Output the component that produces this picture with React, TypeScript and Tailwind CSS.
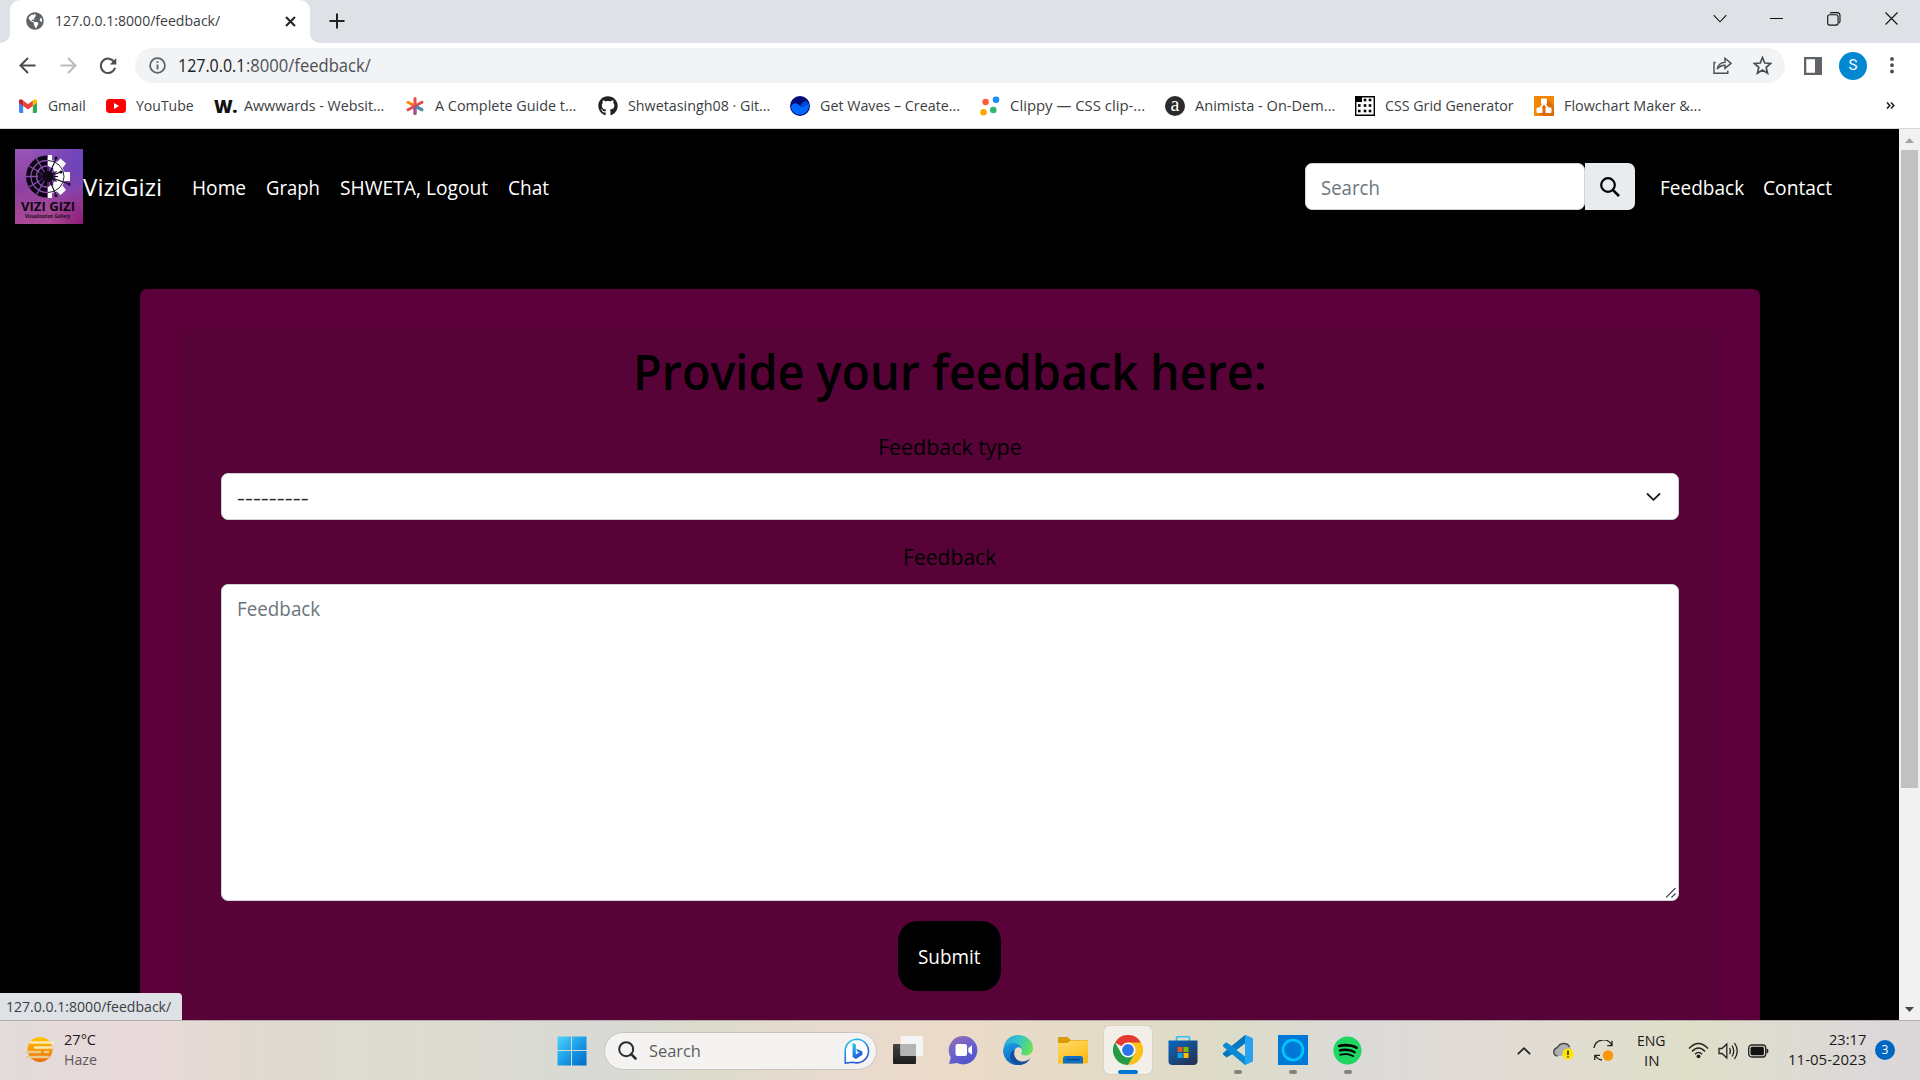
import React, { useLayoutEffect, useRef, useState } from "react";
import { FaGithub, FaSpotify, FaGlobeAmericas } from "react-icons/fa";

/* Text condensed or widened to a given advance width. */
function T({ w, children, className = "" }: { w: number; children: string; className?: string }) {
  const ref = useRef<HTMLSpanElement>(null);
  const [k, setK] = useState(1);
  useLayoutEffect(() => {
    if (ref.current && ref.current.offsetWidth) setK(w / ref.current.offsetWidth);
  }, [w]);
  return (
    <span className={"block shrink-0 whitespace-pre " + className} style={{ width: w }}>
      <span ref={ref} className="inline-block origin-left" style={{ transform: `scaleX(${k})` }}>
        {children}
      </span>
    </span>
  );
}

function TabStrip() {
  return (
    <div className="flex h-[43px] items-start bg-[#dee1e6]">
      <div className="flex h-[43px] w-[10px] items-end bg-white">
        <div className="h-full w-full rounded-br-[10px] bg-[#dee1e6]" />
      </div>
      <div className="flex h-[43px] w-[300px] items-center rounded-t-[10px] bg-white pl-4">
        <div className="flex h-[41px] w-full items-center pb-px">
          <FaGlobeAmericas className="size-[18px] text-[#5f6368]" />
          <T w={165} className="ml-[11px] pb-px text-[15px] text-[#3c4043]">127.0.0.1:8000/feedback/</T>
          <svg className="ml-[65px] size-[11px]" viewBox="0 0 11 11" stroke="#202124" strokeWidth="2">
            <path d="M1 1L10 10M10 1L1 10" />
          </svg>
        </div>
      </div>
      <div className="h-[43px] w-[10px] bg-white">
        <div className="h-full w-full rounded-bl-[10px] bg-[#dee1e6]" />
      </div>
      <svg className="mt-[13px] ml-[9px] size-4" viewBox="0 0 16 16" stroke="#202124" strokeWidth="2">
        <path d="M8 .5V15.5M.5 8H15.5" />
      </svg>
      <svg className="mt-[14px] ml-auto h-[10px] w-[14px]" viewBox="0 0 14 10" fill="none" stroke="#111" strokeWidth="1.1">
        <path d="M.7 1.2L7 7.8L13.3 1.2" />
      </svg>
      <svg className="mt-[14px] ml-[43px] h-[9px] w-[14px]" viewBox="0 0 14 9" stroke="#111">
        <path d="M0 4.5H13" />
      </svg>
      <svg className="mt-3 ml-[43px] size-[14px]" viewBox="0 0 14 14" fill="none" stroke="#111" strokeWidth="1.1">
        <rect x=".7" y="2.7" width="10.4" height="10.4" rx="2" />
        <path d="M3 1.2Q3.6.6 5 .6H10Q13 .6 13 3.6V9Q13 10.6 12.2 11" />
      </svg>
      <svg className="mt-3 mr-[22px] ml-[44px] size-[13px]" viewBox="0 0 13 13" stroke="#111" strokeWidth="1.1">
        <path d="M.5.5L12.5 12.5M12.5.5L.5 12.5" />
      </svg>
    </div>
  );
}

function Toolbar() {
  return (
    <div className="flex h-[45px] items-center bg-white pl-[19px]">
      <svg className="size-[17px]" viewBox="0 0 17 17" fill="none" stroke="#4a4d51" strokeWidth="2">
        <path d="M16.5 8.5H2M9 1L1.5 8.5L9 16" />
      </svg>
      <svg className="ml-6 size-[17px]" viewBox="0 0 17 17" fill="none" stroke="#b9bbbd" strokeWidth="2">
        <path d="M.5 8.5H15M8 1L15.5 8.5L8 16" />
      </svg>
      <svg className="ml-[22px] size-[18px]" viewBox="0 0 18 18" fill="none" stroke="#4a4d51" strokeWidth="2">
        <path d="M15.2 5A7.2 7.2 0 1 0 16 10.8" />
        <path d="M17.3 1V7.4H10.8Z" fill="#4a4d51" stroke="none" />
      </svg>
      <div className="ml-[18px] flex h-[35px] w-[1650px] items-center rounded-full bg-[#f1f3f4] pl-[14px]">
        <svg className="size-[17px]" viewBox="0 0 17 17" fill="none" stroke="#5f6368" strokeWidth="1.8">
          <circle cx="8.5" cy="8.5" r="7.4" />
          <path d="M8.5 7.5V12.5M8.5 4.3V6" />
        </svg>
        <div className="ml-3 flex text-[17.5px]">
          <T w={67.5} className="text-[#202124]">127.0.0.1</T>
          <T w={125} className="text-[#4d5156]">:8000/feedback/</T>
        </div>
        <svg className="ml-auto size-[19px]" viewBox="0 0 19 19" fill="none" stroke="#4a4d51" strokeWidth="1.4">
          <path d="M2.6 6.5H1V17.3H14.8V14.6" />
          <path d="M4.2 13.2C5 8.8 7.5 6.6 12 6.4V2.2L18 7.4L12 12.4V9.2C8.5 9.2 6.3 10.3 4.2 13.2Z" />
        </svg>
        <svg className="mr-[13px] ml-[21px] size-[19px]" viewBox="0 0 18 18" fill="none" stroke="#4a4d51" strokeWidth="1.6">
          <path d="M9 1.4L11.1 6.6L16.7 7.1L12.5 10.8L13.8 16.3L9 13.3L4.2 16.3L5.5 10.8L1.3 7.1L6.9 6.6Z" />
        </svg>
      </div>
      <svg className="ml-[19px] size-[18px]" viewBox="0 0 18 18">
        <path d="M0 0H18V18H0ZM2.3 2.3V15.7H11V2.3Z" fill="#5f6368" fillRule="evenodd" />
      </svg>
      <div className="ml-[17px] flex size-7 items-center justify-center rounded-full bg-[#0288d1] font-[Roboto] text-[15px] text-white">S</div>
      <svg className="ml-[23px] h-[17px] w-1" viewBox="0 0 4 17" fill="#4a4d51">
        <circle cx="2" cy="2" r="1.9" /><circle cx="2" cy="8.2" r="1.9" /><circle cx="2" cy="14.5" r="1.9" />
      </svg>
    </div>
  );
}

function Gmail() {
  return (
    <svg className="size-5" viewBox="0 0 20 20">
      <path d="M1 4.5V15.5Q1 17 2.4 17H5.2V9Z" fill="#4285f4" />
      <path d="M19 4.5V15.5Q19 17 17.6 17H14.8V9Z" fill="#34a853" />
      <path d="M14.8 4.6L16.3 3.5Q19 2.3 19 5V6.8L14.8 10Z" fill="#fbbc04" />
      <path d="M5.2 4.6L10 8.3L14.8 4.6V10L10 13.6L5.2 10Z" fill="#ea4335" />
      <path d="M1 5Q1 2.3 3.7 3.5L5.2 4.6V10L1 6.8Z" fill="#c5221f" />
    </svg>
  );
}

const bookmarks: { name: string; w: number; gap: string; icon: React.ReactNode }[] = [
  { name: "Gmail", w: 38, gap: "mr-5", icon: <Gmail /> },
  {
    name: "YouTube", w: 58, gap: "mr-5",
    icon: <svg className="size-5" viewBox="0 0 20 20"><rect y="3" width="20" height="14" rx="3.4" fill="#f00" /><path d="M8 7L13.2 10L8 13Z" fill="#fff" /></svg>,
  },
  { name: "Awwwards - Websit...", w: 140, gap: "mr-[21px]", icon: <span className="block w-5 text-[18px] leading-5 font-extrabold tracking-tight text-[#111]">W.</span> },
  {
    name: "A Complete Guide t...", w: 141, gap: "mr-[22px]",
    icon: (
      <svg className="size-5" viewBox="0 0 20 20" strokeWidth="3" strokeLinecap="round">
        <defs><linearGradient id="ast" x1="0" y1="0" x2="1" y2="1"><stop offset=".15" stopColor="#ff8a00" /><stop offset=".5" stopColor="#e8434c" /><stop offset="1" stopColor="#8a5cc0" /></linearGradient></defs>
        <path d="M10 2.5V17.5" stroke="#ec4a4a" /><path d="M3 6.2L17 13.8M17 6.2L3 13.8" stroke="url(#ast)" />
        <path d="M11.5 10.8L16.6 13.6" stroke="#3d8fae" /><path d="M10 11V17.5" stroke="#a0528f" />
      </svg>
    ),
  },
  { name: "Shwetasingh08 · Git...", w: 142, gap: "mr-5", icon: <FaGithub className="size-5 text-[#1f2328]" /> },
  {
    name: "Get Waves – Create...", w: 140, gap: "mr-5",
    icon: <svg className="size-5" viewBox="0 0 20 20"><circle cx="10" cy="10" r="10" fill="#000b76" /><path d="M1 10C4 6 7 7 9.5 9.6C12.5 12.5 15 9 18.9 7.6C20 13 16 18.8 10 18.8C5 18.8 1 15 1 10Z" fill="#0066ff" /><path d="M10 10C12 5.5 15 4.5 17.3 5.5L18.6 8C15 9 13 12 10 10Z" fill="#0044d8" /></svg>,
  },
  {
    name: "Clippy — CSS clip-...", w: 135, gap: "mr-5",
    icon: <svg className="size-5" viewBox="0 0 20 20"><circle cx="16" cy="3.7" r="3.3" fill="#1e8cff" /><circle cx="5.6" cy="6" r="3.2" fill="#ff5a36" /><circle cx="13.3" cy="14" r="3.3" fill="#2fb673" /><circle cx="3.5" cy="16.2" r="3.3" fill="#ffa400" /></svg>,
  },
  {
    name: "Animista - On-Dem...", w: 140, gap: "mr-5",
    icon: <span className="flex size-5 items-center justify-center rounded-full bg-[#2b2b2b] pb-1 font-['Liberation_Serif'] text-[20px] leading-none text-white">a</span>,
  },
  {
    name: "CSS Grid Generator", w: 129, gap: "mr-5",
    icon: (
      <svg className="size-5" viewBox="0 0 20 20">
        <path d="M.7.7H19.3V19.3H.7Z" fill="#fff" stroke="#000" strokeWidth="1.4" /><path d="M0 0H7V6H0Z" />
        {[[10, 4], [15, 4], [4.3, 9.5], [10, 9.5], [15, 9.5], [4.3, 15], [10, 15], [15, 15]].map(([x, y]) => <rect key={`${x}-${y}`} x={x - 1.3} y={y - 1.3} width="2.6" height="2.6" />)}
      </svg>
    ),
  },
  {
    name: "Flowchart Maker &...", w: 137, gap: "mr-0",
    icon: (
      <svg className="size-5" viewBox="0 0 20 20"><rect width="20" height="20" rx="1" fill="#f08705" /><path d="M12.5 3L20 10V20H9L3 16Z" fill="#df6c0c" /><path d="M10 7L5.5 13M10 7L14.5 13" stroke="#fff" strokeWidth="1.8" /><rect x="7" y="2.5" width="6" height="5.5" rx="1" fill="#fff" /><rect x="2.5" y="11.5" width="6" height="5.5" rx="1" fill="#fff" /><rect x="11.5" y="11.5" width="6" height="5.5" rx="1" fill="#fff" /></svg>
    ),
  },
];

function Bookmarks() {
  return (
    <div className="flex h-[41px] items-center border-b border-[#d5d7da] bg-white pb-[5px] pl-[18px]">
      {bookmarks.map((b) => (
        <div key={b.name} className={"flex items-center " + b.gap}>
          {b.icon}
          <T w={b.w} className="ml-[10px] pb-[2px] text-[15px] leading-5 text-[#3c4043]">{b.name}</T>
        </div>
      ))}
      <svg className="mr-[25px] ml-auto h-[7px] w-[9px]" viewBox="0 0 9 7" fill="none" stroke="#202124" strokeWidth="1.6">
        <path d="M1 .5L3.8 3.5L1 6.5M5 .5L7.8 3.5L5 6.5" />
      </svg>
    </div>
  );
}

function Logo() {
  const spokes = [0, 30, 60, 90, 120, 150, 180, 210, 240, 270, 300, 330];
  return (
    <svg className="h-[75px] w-[68px] shrink-0" viewBox="0 0 68 75">
      <defs>
        <linearGradient id="lg" x1="0" y1="0" x2=".25" y2="1"><stop offset="0" stopColor="#9758b8" /><stop offset=".5" stopColor="#8f3fa2" /><stop offset="1" stopColor="#ab4a94" /></linearGradient>
        <radialGradient id="lg2" cx="1" cy=".15" r=".8"><stop offset="0" stopColor="#6a45bd" /><stop offset="1" stopColor="#6a45bd" stopOpacity="0" /></radialGradient>
        <radialGradient id="lg3" cx="1" cy="1" r=".5"><stop offset="0" stopColor="#8c1a78" /><stop offset="1" stopColor="#8c1a78" stopOpacity="0" /></radialGradient>
      </defs>
      <rect width="68" height="75" fill="url(#lg)" /><rect width="68" height="75" fill="url(#lg2)" /><rect width="68" height="75" fill="url(#lg3)" />
      <path d="M32 6.5A21 21 0 0 0 32 48.5Z" fill="#090510" />
      <path d="M33 6H37V11L42 13L45.5 9.5L51 14.5L47.5 19L49.5 23H55V32H49.5L47.5 36.5L51 41L45.5 46L42 42.5L37 44V49H33V38A11 11 0 0 0 33 17Z" fill="#fff" />
      <g fill="none" stroke="#8b4fb4" strokeWidth="1.3">
        <path d="M32 11.5A16 16 0 0 0 32 43.5M32 17A10.5 10.5 0 0 0 32 38M11 27.5H32M32 27.5L14 17M32 27.5L14 38M32 27.5L21.5 9.5M32 27.5L21.5 45.5" />
      </g>
      <g stroke="#100818" strokeWidth="1.1">
        {spokes.map((a) => <path key={a} d="M33 27.5H43" transform={`rotate(${a} 33 27.5)`} />)}
        <path d="M33 27.5L41 10M33 27.5L54 35M33 27.5L46 23M33 27.5L41 46" />
      </g>
      <path d="M33 11.5A16 16 0 0 1 33 43.5" fill="none" stroke="#100818" strokeWidth=".9" />
      <circle cx="33" cy="27.5" r="5.5" fill="#100818" />
      <g fill="#100818"><circle cx="41" cy="9" r="1.6" /><circle cx="54" cy="35" r="1.6" /><circle cx="46" cy="23" r="1.6" /><circle cx="41" cy="46.5" r="1.6" /></g>
      <text x="6" y="61.5" textLength="54" lengthAdjust="spacingAndGlyphs" fontFamily="Open Sans" fontWeight="700" fontSize="12" fill="#0c0610">VIZI GIZI</text>
      <text x="10" y="68.5" textLength="45" lengthAdjust="spacingAndGlyphs" fontFamily="Open Sans" fontWeight="700" fontSize="5.2" fill="#1c0c22">Visualization Gallery</text>
    </svg>
  );
}

function Navbar() {
  return (
    <nav className="flex h-[115px] items-center pl-[15px] text-[19.5px] text-white">
      <Logo />
      <T w={79} className="pt-[2px] text-[24.5px]">ViziGizi</T>
      <T w={54} className="ml-[30px] pt-[2px]">Home</T>
      <T w={54} className="ml-5 pt-[2px]">Graph</T>
      <T w={148} className="ml-5 pt-[2px]">SHWETA, Logout</T>
      <T w={41} className="ml-5 pt-[2px]">Chat</T>
      <div className="ml-auto flex h-[47px] bg-black">
        <div className="flex h-[47px] w-[280px] items-center rounded-[7px] border border-[#ced4da] bg-white pl-[15px]">
          <T w={59} className="pt-[2px] text-[#6c757d]">Search</T>
        </div>
        <div className="flex h-[47px] w-[50px] items-center justify-center rounded-r-[7px] bg-[#e9ecef]">
          <svg className="size-5" viewBox="0 0 20 20" fill="none" stroke="#000" strokeWidth="2.2">
            <circle cx="8" cy="8" r="6.8" /><path d="M12.8 12.8L19 19" strokeWidth="2.5" />
          </svg>
        </div>
      </div>
      <T w={84} className="ml-[25px] pt-[2px]">Feedback</T>
      <T w={69} className="mr-[67px] ml-[19px] pt-[2px]">Contact</T>
    </nav>
  );
}

function FeedbackCard() {
  return (
    <section className="mx-auto mt-[45px] h-[760px] w-[1620px] rounded-[7px] bg-[#5c003b] p-[41px]">
      <div className="flex h-[719px] flex-col items-center bg-[#570338] px-10 pt-[11px] text-black">
        <T w={634} className="text-[49px] leading-[60px] font-semibold">Provide your feedback here:</T>
        <T w={144} className="mt-[30px] text-[22px] leading-[30px]">Feedback type</T>
        <div className="mt-3 flex h-[47px] w-full items-center justify-between rounded-[7px] border border-[#ced4da] bg-white pr-[17px] pl-[15px]">
          <T w={71} className="pt-[2px] text-[19.5px] text-[#212529]">---------</T>
          <svg className="h-2 w-[15px]" viewBox="0 0 15 8" fill="none" stroke="#1b1f23" strokeWidth="1.8" strokeLinecap="round"><path d="M1.5 1L7.5 6.8L13.5 1" /></svg>
        </div>
        <T w={93} className="mt-[21px] text-[22px] leading-[30px]">Feedback</T>
        <div className="mt-[13px] flex h-[317px] w-full justify-between rounded-[7px] border border-[#ced4da] bg-white pt-2 pl-[15px]">
          <T w={83} className="text-[19.5px] leading-[31px] text-[#6c757d]">Feedback</T>
          <svg className="mr-[2px] mb-[2px] size-[10px] self-end" viewBox="0 0 10 10" stroke="#444" strokeWidth="1.2"><path d="M0 9.5L9.5 0M5.5 9.5L9.5 5.5" /></svg>
        </div>
        <div className="mt-5 flex h-[70px] w-[103px] items-center justify-center rounded-[20px] bg-black pt-px text-white">
          <T w={63} className="text-[19.5px]">Submit</T>
        </div>
      </div>
    </section>
  );
}

function PageScrollbar() {
  return (
    <div className="flex w-[21px] flex-col items-center bg-[#f1f1f1]">
      <svg className="mt-[9px] h-[5px] w-[9px]" viewBox="0 0 9 5"><path d="M0 5L4.5 0L9 5Z" fill="#a3a3a3" /></svg>
      <div className="mt-[7px] h-[638px] w-[17px] bg-[#c1c1c1]" />
      <svg className="mt-auto mb-2 h-[5px] w-[9px]" viewBox="0 0 9 5"><path d="M0 0L4.5 5L9 0Z" fill="#454545" /></svg>
    </div>
  );
}

function AppCell({ children, mark }: { children: React.ReactNode; mark?: "active" | "open" }) {
  return (
    <div className="flex h-[59px] w-[55px] justify-center">
      <div className={"mt-[5px] flex h-12 w-12 flex-col items-center rounded-[5px] pt-[9px] " + (mark === "active" ? "bg-[#f2eee8] shadow-[0_0_1px_#0005]" : "")}>
        {children}
        {mark === "active" && <div className="mt-[5px] h-1 w-5 rounded-full bg-[#0078d4]" />}
        {mark === "open" && <div className="mt-[5px] h-1 w-2 rounded-full bg-[#858379]" />}
      </div>
    </div>
  );
}

const S = "block size-[30px] shrink-0";

function Apps() {
  return (
    <div className="ml-[3px] flex">
      <AppCell>
        <svg className={S} viewBox="0 0 30 30">
          <defs><linearGradient id="tv" x1="0" y1="0" x2="0" y2="1"><stop stopColor="#454545" /><stop offset="1" stopColor="#1b1b1b" /></linearGradient></defs>
          <rect y="9" width="23" height="20" rx="1" fill="url(#tv)" /><rect x="7.5" y="1" width="22.5" height="20" rx="1" fill="#f4f4f4" /><path d="M7.5 9H23V21H8.5Q7.5 21 7.5 20Z" fill="#b4b4b4" />
        </svg>
      </AppCell>
      <AppCell>
        <svg className={S} viewBox="0 0 30 30">
          <defs><linearGradient id="ch" x1="0" y1="0" x2=".6" y2="1"><stop stopColor="#9a6fb0" /><stop offset=".55" stopColor="#6c62cc" /><stop offset="1" stopColor="#4e55cc" /></linearGradient></defs>
          <path d="M15 1A14.2 14.2 0 1 1 9 28L1 29L2.8 22.5A14.2 14.2 0 0 1 15 1Z" fill="url(#ch)" /><rect x="7.5" y="9" width="11.5" height="12" rx="2" fill="#fff" /><path d="M20.3 13L24 10.2V19.8L20.3 17Z" fill="#fff" />
        </svg>
      </AppCell>
      <AppCell>
        <svg className={S} viewBox="0 0 30 30">
          <defs>
            <linearGradient id="e1" x1="0" y1=".2" x2="1" y2=".5"><stop stopColor="#2ba8dd" /><stop offset=".5" stopColor="#36c6c8" /><stop offset="1" stopColor="#69e253" /></linearGradient>
            <linearGradient id="e2" x1=".2" y1="0" x2=".5" y2="1"><stop stopColor="#1a9fe0" /><stop offset="1" stopColor="#0a63c4" /></linearGradient>
          </defs>
          <path d="M.4 13C1.6 5.2 7.5 0 15 0C24 0 30 6 30 13.2C30 18 26.3 20.5 22.5 20.5C19 20.5 17.8 19.2 18.6 17.6C20.2 14 16 9 10.5 9C5.5 9 1.5 11 .4 13Z" fill="url(#e1)" />
          <path d="M0 15C1 10.5 5 8 10 8C14.5 8 18 10.6 18.6 14C16 10.6 11 12.5 10.6 18C10.3 23 13.5 28.5 18.5 29.5C9 32.5 0 25 0 15Z" fill="url(#e2)" />
          <path d="M12 14.5C9.5 20 13 26.5 19 26.5C22.5 26.5 25.5 25 27.5 23C25 27.5 21 30 16 30C9.5 29.5 6 24 7.5 19C8.5 16 10.5 14.8 12 14.5Z" fill="#154f9c" />
        </svg>
      </AppCell>
      <AppCell>
        <svg className={S} viewBox="0 0 30 30">
          <defs><linearGradient id="fo" x1="0" y1="0" x2=".5" y2="1"><stop stopColor="#ffdc6a" /><stop offset="1" stopColor="#fcbb19" /></linearGradient></defs>
          <path d="M0 3Q0 2 1 2H9.5L13 5H29Q30 5 30 6V12H0Z" fill="#d99c08" /><path d="M0 8H9.5L13 5.5H29Q30 5.5 30 6.5V27Q30 28.5 29 28.5H1Q0 28.5 0 27.5Z" fill="url(#fo)" /><path d="M5 28.5V23.5Q5 21 7.5 21H22.5Q25 21 25 23.5V28.5Z" fill="#0d70c2" /><path d="M9 24.6H21.5" stroke="#083f78" strokeWidth="1.2" strokeLinecap="round" />
        </svg>
      </AppCell>
      <AppCell mark="active">
        <svg className={S} viewBox="0 0 30 30">
          <path d="M15 15L2 7.5A15 15 0 0 1 28 7.5Z" fill="#e33b2e" />
          <path d="M15 7.5H28A15 15 0 0 1 15 30L21.5 18.7Z" fill="#fbc116" />
          <path d="M2 7.5A15 15 0 0 0 15 30L21.5 18.7L8.5 18.7Z" fill="#259b44" />
          <circle cx="15" cy="15" r="7.5" fill="#fff" /><circle cx="15" cy="15" r="5.9" fill="#2d74ea" />
        </svg>
      </AppCell>
      <AppCell>
        <svg className={S} viewBox="0 0 30 30">
          <defs><linearGradient id="st" x1="0" y1="0" x2=".8" y2="1"><stop stopColor="#0869c0" /><stop offset="1" stopColor="#253253" /></linearGradient></defs>
          <path d="M8.5 6.5V3Q8.5 1.8 9.7 1.8H20.3Q21.5 1.8 21.5 3V6.5" fill="none" stroke="#2cc0f0" strokeWidth="1.6" /><path d="M.5 5.5H29.5V26Q29.5 30 25.5 30H4.5Q.5 30 .5 26Z" fill="url(#st)" />
          <path d="M9.5 12H14.5V17H9.5Z" fill="#f25022" /><path d="M15.5 12H20.5V17H15.5Z" fill="#7fba00" /><path d="M9.5 18H14.5V23H9.5Z" fill="#00a4ef" /><path d="M15.5 18H20.5V23H15.5Z" fill="#ffb900" />
        </svg>
      </AppCell>
      <AppCell mark="open">
        <svg className={S} viewBox="0 0 30 30">
          <path d="M22 0L29 3V8L3.5 22.6L0 19.4V18Z" fill="#0277bd" /><path d="M3 7.3L30 24L22 30L0 11.5V10Z" fill="#0a8ad4" /><path d="M22 8.5V21.5L13.5 15Z" fill="#dedccb" /><path d="M22 0L30 3.5V26.5L22 30Z" fill="#26a4f2" />
        </svg>
      </AppCell>
      <AppCell mark="open">
        <svg className={S} viewBox="0 0 30 30">
          <rect width="30" height="30" fill="#0078d7" /><circle cx="15" cy="15" r="10" fill="none" stroke="#00c8ff" strokeWidth="2.6" /><path d="M8 21.5Q11 25.5 14.5 26Q14 24 11 22Z" fill="#00c8ff" />
        </svg>
      </AppCell>
      <AppCell mark="open">
        <div className="flex size-[30px] shrink-0 items-center justify-center">
          <div className="flex size-[29px] items-center justify-center rounded-full bg-[radial-gradient(circle,#000_60%,transparent_62%)]"><FaSpotify className="size-[29px] text-[#1ed760]" /></div>
        </div>
      </AppCell>
    </div>
  );
}

function Taskbar() {
  return (
    <div className="flex h-[60px] items-center border-t border-[#b3aeab] bg-[linear-gradient(90deg,#e1dbd9_0px,#ead9da_140px,#e0dacf_260px,#dddcd0_420px,#d8d9d5_610px,#dcdccc_700px,#e7dacf_820px,#ebdac8_960px,#dddcc8_1230px,#dbdad8_1350px,#e2dbd5_1480px,#dfdfc9_1690px,#dcd8da_1880px)] text-[15px] text-[#1b1b1b]">
      <svg className="-mt-[3px] ml-[25px] h-[30px] w-[30px]" viewBox="0 0 30 30">
        <defs><linearGradient id="sun" x1="0" y1="0" x2="0" y2="1"><stop stopColor="#ffc800" /><stop offset="1" stopColor="#ea6a0c" /></linearGradient></defs>
        <circle cx="15" cy="15.5" r="12.5" fill="url(#sun)" />
        <g strokeLinecap="round" strokeWidth="2.6"><path d="M6 8.5H28.5M10 13.5H26" stroke="#fbe9b5" /><path d="M2 18H15M20 18H23M2 23H23" stroke="#e8cb8d" /></g>
      </svg>
      <div className="ml-[9px] pb-[3px] leading-5">
        <T w={32}>27°C</T>
        <T w={33} className="text-[#5a5757]">Haze</T>
      </div>
      <svg className="ml-[460px] size-[30px]" viewBox="0 0 30 30">
        <defs><linearGradient id="win" x1="0" y1="0" x2="1" y2="1"><stop stopColor="#4fd2fb" /><stop offset=".5" stopColor="#1c9fe8" /><stop offset="1" stopColor="#0067c9" /></linearGradient></defs>
        <path d="M1 .5H14V14H.5V1ZM15 .5H29.5V14H15ZM.5 15H14V29.5H.5ZM15 15H29.5V29.5H15Z" fill="url(#win)" />
      </svg>
      <div className="ml-[17px] flex h-[38px] w-[273px] items-center rounded-full border border-[#c9c6c0] bg-[#f4f3f1] pl-[13px]">
        <svg className="size-[19px]" viewBox="0 0 19 19" fill="none" stroke="#2c2c2c" strokeWidth="2"><circle cx="8.2" cy="8.2" r="7" /><path d="M13.2 13.2L17.5 17.5" strokeWidth="2.6" strokeLinecap="round" /></svg>
        <T w={52} className="ml-3 text-[17px] text-[#5e5d5b]">Search</T>
        <svg className="mr-[6px] ml-auto size-[26px]" viewBox="0 0 26 26">
          <defs><linearGradient id="bi" x1="0" y1="0" x2=".4" y2="1"><stop stopColor="#27cdf2" /><stop offset="1" stopColor="#2457d8" /></linearGradient></defs>
          <path d="M13 1.2A11.8 11.8 0 1 1 9 24.2L1.3 25L1.2 13A11.8 11.8 0 0 1 13 1.2Z" fill="#fff" stroke="url(#bi)" strokeWidth="1.6" />
          <path d="M8.5 5L11.8 6.3V16.5L15 14.5L13 13.5L12.2 10.5L18.5 13.5V16.8L11.8 21L8.5 18.8Z" fill="url(#bi)" />
        </svg>
      </div>
      <Apps />
      <svg className="ml-auto h-2 w-[14px]" viewBox="0 0 14 8" fill="none" stroke="#222" strokeWidth="1.7"><path d="M.8 7.2L7 1.2L13.2 7.2" /></svg>
      <svg className="ml-[22px] h-[18px] w-[21px]" viewBox="0 0 21 18">
        <path d="M4.5 14Q.8 13.5.8 10Q1 6.5 4.5 5.5Q6.5 1.5 11 1.5Q15 1.5 16.5 5Q18 5.5 18.3 7L8 14Z" fill="#aeb0b4" />
        <path d="M4.5 14Q.8 13.5.8 10Q1 6.5 4.5 5.5Q6.5 1.5 11 1.5Q15 1.5 16.5 5" fill="none" stroke="#4a4a4c" strokeWidth="1.5" />
        <circle cx="15" cy="12" r="5.7" fill="#ffe600" /><path d="M15 8.5V13M15 14.2V15.5" stroke="#222" strokeWidth="1.5" />
      </svg>
      <svg className="ml-[19px] size-[21px]" viewBox="0 0 21 21" fill="none" stroke="#222" strokeWidth="1.3">
        <path d="M1 8A9.5 9.5 0 0 1 19 5.5M19 .8V5.6H14.2M1.8 20V15.3H7M2.3 15.5Q4.5 19.5 9 20" /><circle cx="15" cy="15.5" r="5.2" fill="#ff950a" stroke="none" />
      </svg>
      <div className="ml-[23px] flex flex-col items-center pb-px leading-5"><T w={29}>ENG</T><T w={15}>IN</T></div>
      <svg className="ml-[22px] h-[17px] w-[21px]" viewBox="0 0 21 17" fill="none" stroke="#222" strokeWidth="1.4"><path d="M1 6.5Q10.5 -3.5 20 6.5M4 9.5Q10.5 2.5 17 9.5M7 12.3Q10.5 8.5 14 12.3" /><circle cx="10.5" cy="14.3" r="1.9" fill="#222" stroke="none" /></svg>
      <svg className="ml-[9px] h-[18px] w-[21px]" viewBox="0 0 21 18" fill="none" stroke="#222" strokeWidth="1.3"><path d="M1 6.5H4L8.8 2V16L4 11.5H1ZM11.5 6Q13.3 9 11.5 12M14 3.5Q17.5 9 14 14.5M16.5 1Q22 9 16.5 17" /></svg>
      <svg className="ml-[9px] h-[14px] w-[21px]" viewBox="0 0 21 14"><rect x=".7" y="1" width="17" height="12" rx="3" fill="none" stroke="#222" strokeWidth="1.3" /><rect x="2.5" y="2.8" width="13.4" height="8.4" rx="1.5" fill="#111" /><path d="M18.5 4.5Q20.5 4.8 20.5 7T18.5 9.5Z" fill="#222" /></svg>
      <div className="ml-[19px] flex flex-col items-end pb-[3px] leading-5"><T w={37}>23:17</T><T w={78}>11-05-2023</T></div>
      <div className="mr-[25px] mb-px ml-[9px] flex size-5 items-center justify-center rounded-full bg-[#0067c0] text-[12px] leading-none text-white">3</div>
    </div>
  );
}

export default function App() {
  return (
    <div className="flex h-[1080px] w-[1920px] flex-col overflow-hidden bg-white font-['Open_Sans','Noto_Sans',sans-serif]">
      <TabStrip />
      <Toolbar />
      <Bookmarks />
      <div className="relative flex h-[891px] overflow-hidden bg-black">
        <main className="h-[891px] w-[1899px] overflow-hidden">
          <Navbar />
          <FeedbackCard />
        </main>
        <PageScrollbar />
        <div className="absolute bottom-0 left-0 flex h-[27px] w-[182px] items-center rounded-tr-[4px] bg-[#dee1e6] pl-[6px] text-[15px] text-[#3c4043]">
          <T w={165}>127.0.0.1:8000/feedback/</T>
        </div>
      </div>
      <Taskbar />
    </div>
  );
}
